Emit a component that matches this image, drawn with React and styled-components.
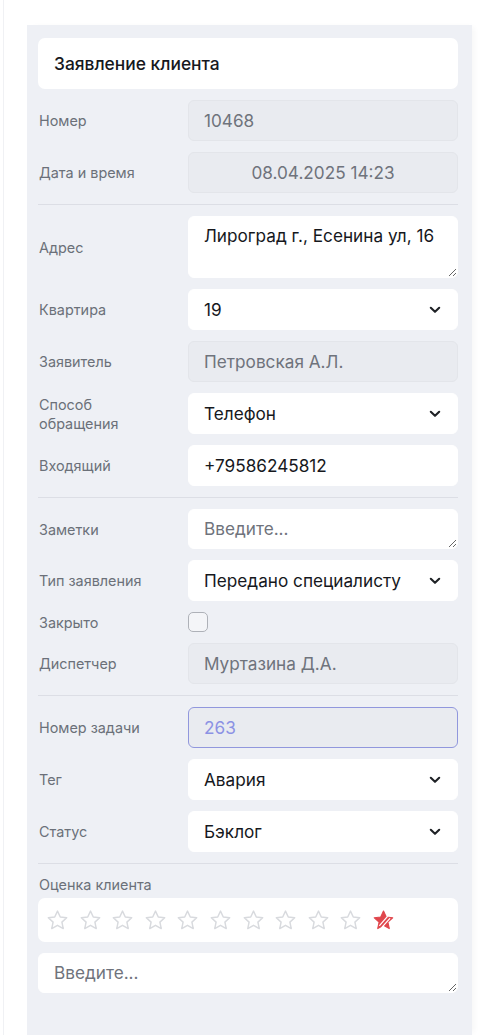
import React from 'react';
import styled, { createGlobalStyle, css } from 'styled-components';

const GlobalStyle = createGlobalStyle`
  html, body {
    margin: 0;
    padding: 0;
    background: #ffffff;
    font-family: Inter, "Noto Sans", "Liberation Sans", sans-serif;
  }
  * { box-sizing: border-box; }
`;

const Page = styled.div`
  padding: 25px 16px 0 23px;
  border-left: 1px solid #f0f1f4;
  margin-left: 3px;
`;

const Panel = styled.div`
  width: 445px;
  min-height: 1010px;
  background: #eef0f5;
  padding: 13px 14px 40px 11px;
  display: flex;
  flex-direction: column;
  gap: 11px;
  box-shadow: 4px 0 6px -2px rgba(0, 0, 0, 0.04);
`;

const Header = styled.div`
  height: 51px;
  background: #ffffff;
  border-radius: 7px;
  display: flex;
  align-items: center;
  padding-left: 16px;
  font-size: 17.4px;
  font-weight: 500;
  color: #16181d;
`;

const Row = styled.div`
  display: grid;
  grid-template-columns: 150px 1fr;
  align-items: center;
`;

const Label = styled.div`
  font-size: 14.4px;
  line-height: 19px;
  color: #6b7079;
  max-width: 112px;
  padding-left: 1px;
`;

const fieldBase = css`
  width: 100%;
  height: ${p => p.$h || 41}px;
  border-radius: 6px;
  font-family: inherit;
  font-size: 17.2px;
  padding: 0 15px;
  outline: none;
`;

const Field = styled.div`
  ${fieldBase};
  display: flex;
  align-items: center;
  justify-content: ${p => (p.$center ? 'center' : 'flex-start')};
  background: ${p => (p.$readonly ? '#e9ebf0' : '#ffffff')};
  border: 1px solid ${p => (p.$accent ? '#9197dd' : p.$readonly ? '#e3e5ea' : '#ffffff')};
  color: ${p => (p.$accent ? '#8c92e4' : p.$readonly ? '#6f737c' : '#16181d')};
`;

const SelectBox = styled(Field)`
  justify-content: space-between;
  padding-right: 16px;
`;

const Area = styled.textarea`
  ${fieldBase};
  display: block;
  padding-top: 8px;
  background: #ffffff;
  border: 1px solid #ffffff;
  color: #16181d;
  line-height: 21px;
  resize: vertical;
  &::placeholder {
    color: #6f737c;
  }
`;

const Divider = styled.div`
  height: 1px;
  background: #dcdee5;
`;

const CheckBox = styled.div`
  width: 20px;
  height: 20px;
  border: 1.5px solid #aeb1b8;
  border-radius: 5px;
  background: #f4f5f8;
`;

const RatingLabel = styled(Label)`
  max-width: none;
`;

const Stars = styled.div`
  height: 44px;
  background: #ffffff;
  border-radius: 7px;
  display: flex;
  align-items: center;
  gap: 9.6px;
  padding-left: 8px;
  margin-top: -7px;
`;

const Chevron = () => (
  <svg width="12" height="8" viewBox="0 0 12 8" fill="none">
    <path d="M1.8 1.8 L6 5.8 L10.2 1.8" stroke="#1f2226" strokeWidth="2.1" strokeLinecap="round" strokeLinejoin="round" />
  </svg>
);

const STAR = 'M12 2.2 L14.9 8.4 L21.6 9.1 L16.6 13.7 L18 20.4 L12 17 L6 20.4 L7.4 13.7 L2.4 9.1 L9.1 8.4 Z';

const Star = () => (
  <svg width="23" height="23" viewBox="0 0 24 24" fill="none">
    <path d={STAR} stroke="#d8dade" strokeWidth="1.5" strokeLinejoin="round" />
  </svg>
);

const ClearStar = () => (
  <svg width="23" height="23" viewBox="0 0 24 24">
    <path d={STAR} fill="#e0474d" stroke="#e0474d" strokeWidth="1.2" strokeLinejoin="round" />
    <path d="M8 17 L16 8" stroke="#ffffff" strokeWidth="1.3" strokeLinecap="round" />
    <path d="M10.5 19 L18.5 10" stroke="#ffffff" strokeWidth="1.3" strokeLinecap="round" />
  </svg>
);

const FormRow = ({ label, children }) => (
  <Row>
    <Label>{label}</Label>
    {children}
  </Row>
);

const Select = ({ value }) => (
  <SelectBox>
    <span>{value}</span>
    <Chevron />
  </SelectBox>
);

export default function App() {
  return (
    <>
      <GlobalStyle />
      <Page>
        <Panel>
          <Header>Заявление клиента</Header>
          <FormRow label="Номер">
            <Field $readonly>10468</Field>
          </FormRow>
          <FormRow label="Дата и время">
            <Field $readonly $center>08.04.2025 14:23</Field>
          </FormRow>
          <Divider />
          <FormRow label="Адрес">
            <Area $h={62} defaultValue="Лироград г., Есенина ул, 16" />
          </FormRow>
          <FormRow label="Квартира">
            <Select value="19" />
          </FormRow>
          <FormRow label="Заявитель">
            <Field $readonly>Петровская А.Л.</Field>
          </FormRow>
          <FormRow label="Способ обращения">
            <Select value="Телефон" />
          </FormRow>
          <FormRow label="Входящий">
            <Field>+79586245812</Field>
          </FormRow>
          <Divider />
          <FormRow label="Заметки">
            <Area $h={40} placeholder="Введите..." />
          </FormRow>
          <FormRow label="Тип заявления">
            <Select value="Передано специалисту" />
          </FormRow>
          <FormRow label="Закрыто">
            <CheckBox />
          </FormRow>
          <FormRow label="Диспетчер">
            <Field $readonly>Муртазина Д.А.</Field>
          </FormRow>
          <Divider />
          <FormRow label="Номер задачи">
            <Field $readonly $accent>263</Field>
          </FormRow>
          <FormRow label="Тег">
            <Select value="Авария" />
          </FormRow>
          <FormRow label="Статус">
            <Select value="Бэклог" />
          </FormRow>
          <Divider />
          <RatingLabel>Оценка клиента</RatingLabel>
          <Stars>
            {Array.from({ length: 10 }).map((_, i) => (
              <Star key={i} />
            ))}
            <ClearStar />
          </Stars>
          <Area $h={40} placeholder="Введите..." />
        </Panel>
      </Page>
    </>
  );
}
